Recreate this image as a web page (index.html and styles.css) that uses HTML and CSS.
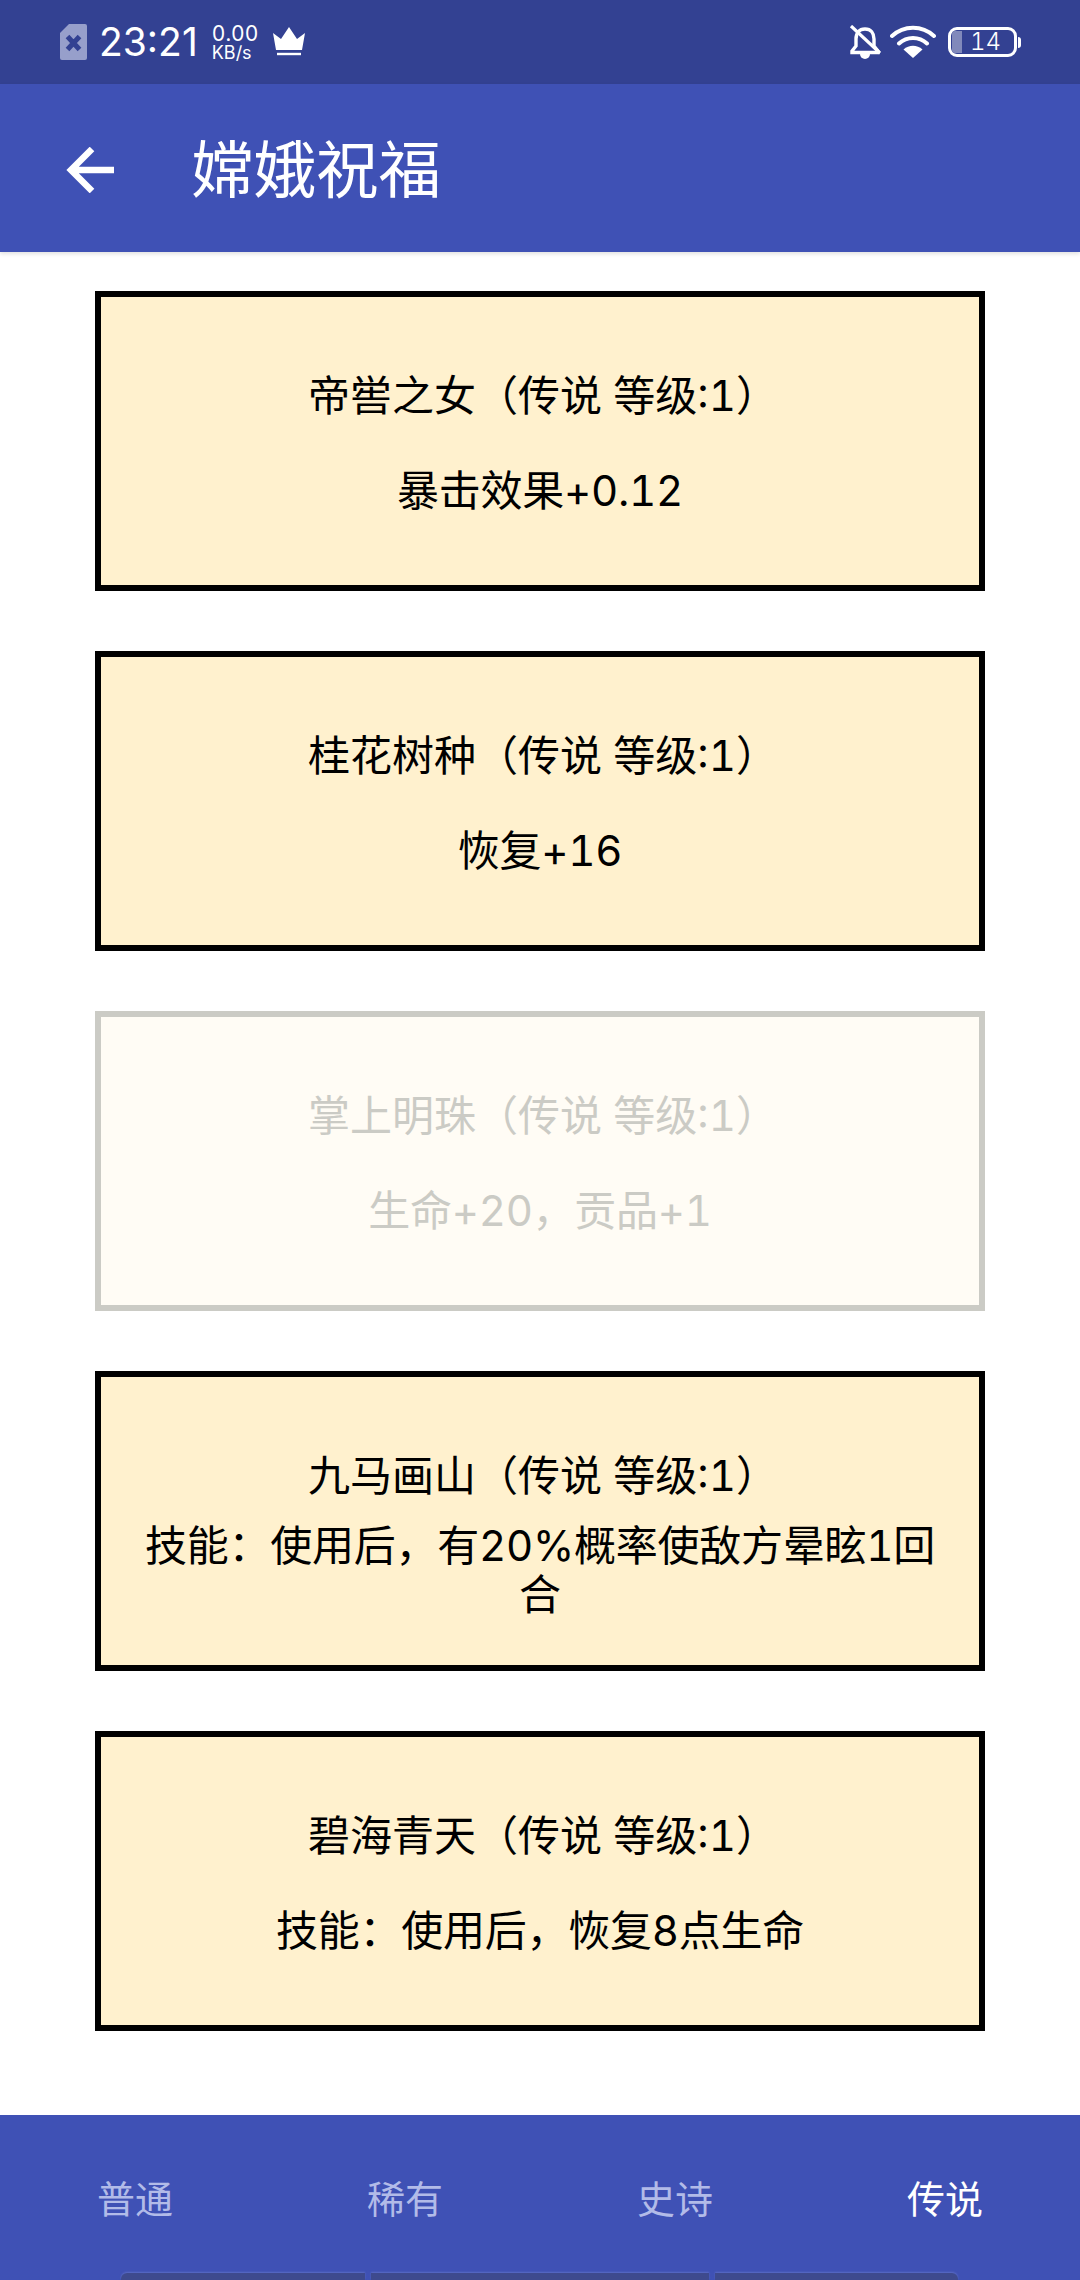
FILE: index.html
```html
<!DOCTYPE html>
<html lang="zh-CN">
<head>
<meta charset="utf-8">
<title>嫦娥祝福</title>
<link rel="stylesheet" href="styles.css">
</head>
<body>
<div class="phone">
  <header class="status">
    <div class="status-left">
      <svg class="sim" viewBox="0 0 27 36"><path d="M9 0h16a2 2 0 0 1 2 2v32a2 2 0 0 1-2 2H2a2 2 0 0 1-2-2V9z" fill="#979fcb"/><path d="M7.500 12.500l12 13M19.500 12.500l-12 13" stroke="#334192" stroke-width="5" fill="none"/></svg>
      <span class="time">23:21</span>
      <span class="speed"><span class="speed-num">0.00</span><span class="speed-unit">KB/s</span></span>
      <svg class="crown" viewBox="0 0 32 30"><path d="M0 6l8 6 8-12 8 12 8-6-3 17H3z" fill="#fff"/><path d="M4 27h24" stroke="#fff" stroke-width="2.400"/></svg>
    </div>
    <div class="status-right">
      <svg class="bell" viewBox="0 0 32 34"><path d="M16 4c-6 0-9 4-9 10v7l-4 5v1.500h26V26l-4-5v-7c0-6-3-10-9-10z" fill="none" stroke="#fff" stroke-width="3.400"/><path d="M11 29a5 5 0 0 0 10 0z" fill="#fff"/><path d="M2 1l29 27" stroke="#fff" stroke-width="3.200"/></svg>
      <svg class="wifi" viewBox="0 0 46 34"><path d="M2 11C14 0 32 0 44 11M9 18.500C17 11 29 11 37 18.500" fill="none" stroke="#fff" stroke-width="4" stroke-linecap="round"/><path d="M13.500 24.500C19 19.500 27 19.500 32.500 24.500L23 33z" fill="#fff"/></svg>
      <div class="battery-wrap">
        <div class="battery"><span class="battery-level"></span><span class="battery-text">14</span></div>
        <span class="battery-tip"></span>
      </div>
    </div>
  </header>
  <div class="appbar">
    <svg class="back" viewBox="0 0 48 46"><path d="M48 23H6M26 2L5 23l21 21" fill="none" stroke="#fff" stroke-width="6.500"/></svg>
    <h1 class="title">嫦娥祝福</h1>
  </div>
  <main class="list">
    <section class="card"><p class="card-title">帝喾之女（传说 等级:1）</p><div class="card-body"><p class="card-text">暴击效果+0.12</p></div></section>
    <section class="card"><p class="card-title">桂花树种（传说 等级:1）</p><div class="card-body"><p class="card-text">恢复+16</p></div></section>
    <section class="card card-off"><p class="card-title">掌上明珠（传说 等级:1）</p><div class="card-body"><p class="card-text">生命+20，贡品+1</p></div></section>
    <section class="card"><p class="card-title">九马画山（传说 等级:1）</p><div class="card-body"><p class="card-text">技能：使用后，有20%概率使敌方晕眩1回合</p></div></section>
    <section class="card"><p class="card-title">碧海青天（传说 等级:1）</p><div class="card-body"><p class="card-text">技能：使用后，恢复8点生命</p></div></section>
  </main>
  <nav class="tabs">
    <div class="tab-row">
      <span class="tab">普通</span>
      <span class="tab">稀有</span>
      <span class="tab">史诗</span>
      <span class="tab tab-on">传说</span>
    </div>
    <div class="gesture">
      <span class="seg seg-a"></span><span class="seg seg-b"></span><span class="seg seg-c"></span>
    </div>
  </nav>
</div>
</body>
</html>
```
FILE: styles.css
```css
* { box-sizing: border-box; }
html, body { margin: 0; padding: 0; }
body { background: #fff; font-family: Inter, "Noto Sans CJK SC", sans-serif; font-variant-numeric: tabular-nums; }
.phone { width: 1080px; height: 2280px; display: flex; flex-direction: column; overflow: hidden; }
.status { height: 84px; flex: none; background: #334192; color: #fff; display: flex; justify-content: space-between; align-items: center; padding: 0 59px 0 60px; }
.status-left, .status-right { display: flex; align-items: center; }
.sim { width: 27px; height: 36px; }
.time { font-size: 39px; margin-left: 12px; line-height: 44px; font-variant-numeric: normal; }
.speed { display: flex; flex-direction: column; margin-left: 14px; line-height: 1; }
.speed-num { font-size: 21px; line-height: 21px; }
.speed-unit { font-size: 18px; line-height: 18px; }
.crown { width: 32px; height: 30px; margin-left: 15px; }
.bell { width: 32px; height: 34px; margin-right: 9px; }
.wifi { width: 46px; height: 34px; margin-right: 12px; }
.battery-wrap { display: flex; align-items: center; }
.battery { width: 69px; height: 30px; border: 3px solid #fff; border-radius: 9px; position: relative; display: flex; justify-content: center; align-items: center; padding-left: 6px; }
.battery-level { position: absolute; left: 1px; top: 1px; bottom: 1px; width: 10px; background: #8189bb; border-radius: 3px 0 0 3px; }
.battery-text { font-size: 24px; line-height: 1; font-weight: 300; }
.battery-tip { width: 3px; height: 11px; background: #fff; border-radius: 0 3px 3px 0; margin-left: 1px; }
.appbar { height: 168px; flex: none; background: #3f51b5; display: flex; align-items: center; padding: 4px 0 0 66px; box-shadow: 0 2px 4px rgba(0,0,0,.12); position: relative; }
.back { width: 48px; height: 46px; }
.title { margin: 0 0 0 77px; font-size: 62.500px; font-weight: 400; color: #fff; line-height: 1; }
.list { flex: 1; display: flex; flex-direction: column; gap: 60px; padding-top: 39px; align-items: center; }
.card { width: 890px; height: 300px; flex: none; background: #fff1ce; border: 6px solid #000; color: #000; font-size: 42px; text-align: center; display: flex; flex-direction: column; padding: 74px 40px 0; }
.card p { margin: 0; line-height: 49px; }
.card .card-title { padding-left: 6px; }
.card-text { letter-spacing: -0.25px; }
.card-body { height: 140px; display: flex; align-items: center; justify-content: center; }
.card-off { background: #fffcf5; border-color: #cbcbc5; color: #cbcbc5; }
.tabs { height: 165px; flex: none; background: #3f51b5; display: flex; flex-direction: column; }
.tab-row { display: grid; grid-template-columns: repeat(4, 270px); height: 158px; align-items: center; padding-top: 4px; }
.tab { text-align: center; font-size: 38px; color: #b2bbe8; }
.tab-on { color: #fff; }
.gesture { display: flex; gap: 6px; padding-left: 121px; }
.seg { height: 7px; background: #3e4a8e; box-shadow: 0 -1px 2px rgba(120,135,215,.5); }
.seg-a { width: 244px; border-radius: 6px 0 0 0; }
.seg-b { width: 338px; }
.seg-c { width: 243px; border-radius: 0 6px 0 0; }
```
